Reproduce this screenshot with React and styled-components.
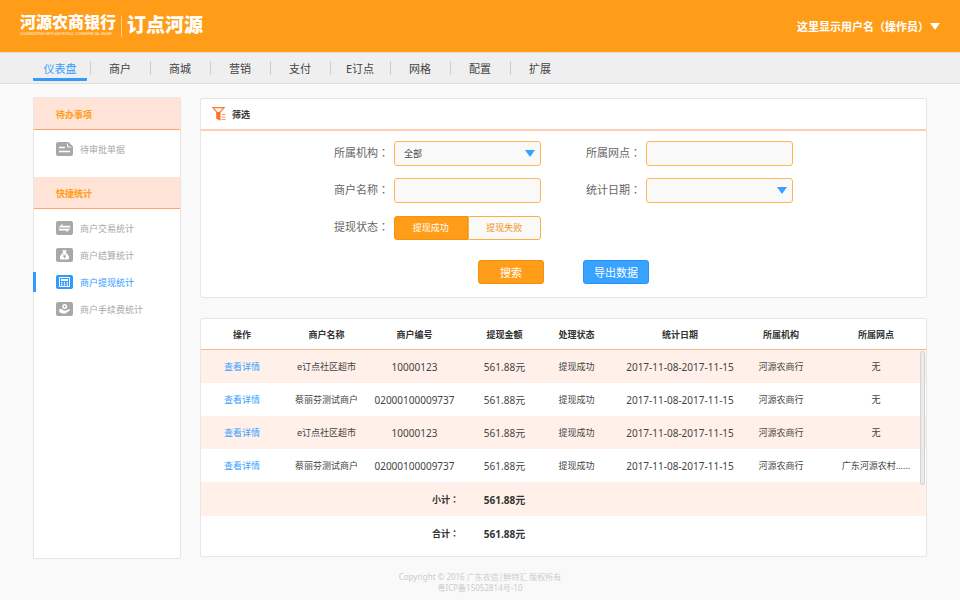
import React, { useState } from "react";
import styled, { createGlobalStyle } from "styled-components";

const GlobalStyle = createGlobalStyle`
  * {
    box-sizing: border-box;
  }
  body {
    margin: 0;
    background: #f9f9f9;
    color: #444;
    font-family: "Noto Sans", "Noto Sans CJK SC", sans-serif;
    font-size: 9px;
  }
  button,
  input,
  select {
    font-family: inherit;
    margin: 0;
  }
  ul {
    list-style: none;
    margin: 0;
    padding: 0;
  }
  a {
    text-decoration: none;
  }
`;

// full-width punctuation sits in the middle of its box
const Punct = styled.span`
  font-family: "Noto Sans CJK TC", sans-serif;
`;

const Header = styled.header`
  display: flex;
  align-items: center;
  justify-content: space-between;
  height: 52px;
  padding: 0 20px;
  background: #ff9d18;
  color: #fff;
`;

const Logo = styled.a`
  display: flex;
  align-items: center;
  gap: 5px;
  color: #fff;
  font-family: "Liberation Sans", "Noto Sans CJK SC", sans-serif;
  font-weight: 900;
`;

const BankName = styled.span`
  display: flex;
  flex-direction: column;
  font-size: 16px;
  line-height: 16px;
`;

const BankNameEn = styled.small`
  font-family: Roboto, sans-serif;
  font-size: 4px;
  line-height: 6px;
  font-weight: 400;
  opacity: 0.8;
`;

const LogoDivider = styled.i`
  width: 1px;
  height: 21px;
  background: #ffd08c;
`;

const ProductName = styled.span`
  font-size: 19px;
  line-height: 20px;
`;

const UserMenu = styled.button`
  display: flex;
  align-items: center;
  gap: 1px;
  padding: 0;
  border: 0;
  background: none;
  color: #fff;
  font-size: 11px;
  font-weight: 700;
`;

const Nav = styled.nav`
  border-top: 1px solid #e3dccf;
  border-bottom: 1px solid #e6dcd8;
  background: #efefef;
`;

const NavList = styled.ul`
  display: flex;
  height: 30px;
  padding-left: 31px;
`;

const NavItem = styled.li`
  display: flex;
  align-items: flex-start;
  width: 60px;

  & + &::before {
    content: "";
    width: 1px;
    height: 14px;
    margin: 8px 0 0 -1px;
    background: #cecece;
  }
`;

const NavLink = styled.a`
  flex: 1;
  height: 28px;
  margin: 0 4px 0 2px;
  border-bottom: 3px solid ${(props) => (props.$active ? "#2f9bff" : "transparent")};
  border-radius: 1px;
  color: ${(props) => (props.$active ? "#2f9bff" : "#444")};
  font-size: 11px;
  line-height: 32px;
  text-align: center;
  white-space: nowrap;
`;

const Main = styled.main`
  display: grid;
  grid-template-columns: 148px minmax(0, 1fr);
  gap: 19px;
  padding: 13px 33px 0;
`;

const Sidebar = styled.aside`
  border: 1px solid #e6e6e6;
  border-radius: 2px;
  background: #fff;
`;

const SideTitle = styled.h2`
  height: 32px;
  margin: 0;
  padding-left: 22px;
  border-bottom: 1px solid #ffa26b;
  background: #ffe3d6;
  color: #ff9d18;
  font-size: 9px;
  line-height: 34px;
`;

const SideList = styled.ul`
  display: flex;
  flex-direction: column;
  gap: 7px;
  padding: 9px 0 18px;
`;

const SideLink = styled.a`
  display: flex;
  align-items: center;
  gap: 7px;
  height: 20px;
  margin-left: -1px;
  padding-left: 20px;
  border-left: 3px solid ${(props) => (props.$active ? "#2f9bff" : "transparent")};
  color: ${(props) => (props.$active ? "#2f9bff" : "#a8a8a8")};
`;

const Content = styled.div`
  display: flex;
  flex-direction: column;
  gap: 20px;
  padding: 1px 0 2px;
`;

const Panel = styled.section`
  position: relative;
  border: 1px solid #e6e6e6;
  border-radius: 2px;
  background: #fff;
`;

const PanelTitle = styled.h2`
  display: flex;
  align-items: center;
  gap: 6px;
  height: 32px;
  margin: 0;
  padding-left: 11px;
  border-bottom: 2px solid #ffcdb3;
  color: #333;
  font-size: 9px;
`;

const FilterForm = styled.form`
  padding: 10px 0 13px;
`;

const Fields = styled.div`
  display: grid;
  grid-template-columns: 207px 207px;
  justify-content: center;
  gap: 12px 45px;
`;

const Field = styled.div`
  display: flex;
  align-items: center;
  height: 25px;
`;

const Label = styled.label`
  width: 60px;
  padding-bottom: 3px;
  color: #666;
  font-size: 11px;
  white-space: nowrap;
`;

const TextInput = styled.input`
  width: 147px;
  height: 25px;
  padding: 0 9px;
  border: 1px solid #ffb653;
  border-radius: 3px;
  background: #f9f9f9;
  color: #444;
  font-size: 9px;
`;

const SelectBox = styled.div`
  position: relative;

  svg {
    position: absolute;
    top: 9px;
    right: 6px;
    pointer-events: none;
  }
`;

const Select = styled(TextInput).attrs({ as: "select" })`
  appearance: none;
`;

const Segmented = styled.div`
  display: flex;
  width: 147px;
  height: 24px;
`;

const Segment = styled.button`
  flex: 1;
  padding: 0;
  border: 1px solid ${(props) => (props.$on ? "#f9920b" : "#ffae44")};
  border-radius: ${(props) => (props.$first ? "3px 0 0 3px" : "0 3px 3px 0")};
  background: ${(props) => (props.$on ? "#ff9d18" : "#f9f9f9")};
  color: ${(props) => (props.$on ? "#fff" : "#f0931a")};
  font-size: 9px;
`;

const Actions = styled.div`
  display: flex;
  justify-content: center;
  gap: 39px;
  margin-top: 20px;
`;

const Button = styled.button`
  width: 66px;
  height: 24px;
  padding: 0;
  border: 1px solid ${(props) => (props.$blue ? "#2b93f2" : "#f0900f")};
  border-radius: 3px;
  background: ${(props) => (props.$blue ? "#37a2ff" : "#ff9d18")};
  color: #fff;
  font-size: 11px;
`;

const TablePanel = styled(Panel)`
  padding-bottom: 6px;
`;

const Table = styled.table`
  width: 100%;
  border-spacing: 0;
  table-layout: fixed;

  th,
  td {
    height: 33px;
    padding: 0;
    text-align: center;
    white-space: nowrap;
  }
  th {
    color: #333;
  }
  thead th {
    height: 31px;
    border-bottom: 1px solid #ffb58c;
  }
  tbody tr:nth-child(odd) {
    background: #fff0e9;
  }
`;

const Cell = styled.td`
  font-size: ${(props) => (props.$num ? "10px" : "9px")};
`;

const LastCell = styled.td`
  && {
    padding-left: 21px;
  }
`;

const TotalRow = styled.tr`
  && > * {
    height: 34px;
  }
  && th {
    text-align: right;
  }
`;

const TotalCell = styled(Cell)`
  color: #333;
  font-weight: 700;
`;

const RowLink = styled.a`
  color: #37a2ff;
`;

const ScrollThumb = styled.div`
  position: absolute;
  top: 32px;
  right: 1px;
  width: 5px;
  height: 134px;
  border: 1px solid #d2d2d2;
  border-radius: 3px;
  background: #ebebeb;
`;

const Footer = styled.footer`
  padding: 12px 0 6px;
  color: #ccc;
  font-size: 8px;
  line-height: 11px;
  text-align: center;

  p {
    margin: 0;
  }
`;

const Triangle = ({ color }) => (
  <svg width="10" height="7" viewBox="0 0 10 7" aria-hidden="true">
    <path d="M0 0h10L5 7z" fill={color} />
  </svg>
);

const FilterIcon = () => (
  <svg width="14" height="14" viewBox="0 0 14 14" aria-hidden="true">
    <path d="M.9.7h11.200L8 5.500H5z" fill="#fff3ec" stroke="#ff7d3c" strokeWidth="1.200" />
    <path d="M4.200 5.200h4.300v8.600L4.200 11.500z" fill="#ff6f2c" />
    <path d="M9.500 7.500h4M9.500 10h4M9.500 12.500h4" stroke="#ff9a66" />
  </svg>
);

const glyphs = {
  transfer: (
    <path d="M2.500 6.400L6.500 2.800v1.900h7.700v1.700zM14.500 7.700l-4 3.600V9.400H2.800V7.700z" fill="#fff" />
  ),
  bag: (
    <>
      <path
        d="M6.300 2.300h4.400l-.9 2.200c2 1.500 3.300 3.500 3.300 5.200 0 1.400-.8 1.900-2 1.900H5.900c-1.200 0-2-.5-2-1.900 0-1.700 1.300-3.700 3.300-5.200z"
        fill="#fff"
      />
      <path d="M7.200 6.300l1.300 1.400 1.300-1.400M7 8.300h3M8.500 7.800v2.500" fill="none" stroke="currentColor" />
    </>
  ),
  calc: (
    <>
      <path d="M3.500 2.500h10v9h-10z" fill="none" stroke="#fff" />
      <path d="M5 4h7v2H5z" fill="#fff" />
      <path d="M5.700 7v3.500M8.500 7v3.500M11.300 7v3.500" stroke="#fff" strokeWidth="1.300" strokeDasharray="1.500 .5" />
    </>
  ),
  hand: (
    <>
      <circle cx="8.700" cy="4.500" r="1.800" fill="none" stroke="#fff" strokeWidth="1.400" />
      <path
        d="M3.300 7.300c1.700-.5 2.800 0 3.800 1l2.600.4 3.500-1.700.8 1.200-4.200 3.100c-1.800.8-4 0-6.500-1.300z"
        fill="#fff"
      />
    </>
  ),
};

const SideIcon = ({ name }) => {
  if (name === "doc") {
    return (
      <svg width="17" height="14" viewBox="0 0 17 14" aria-hidden="true">
        <path
          d="M2 0h10.500L17 4.500V12a2 2 0 0 1-2 2H2a2 2 0 0 1-2-2V2a2 2 0 0 1 2-2z"
          fill="currentColor"
        />
        <path d="M3 5.500h6M3 9.500h11" stroke="#fff" strokeWidth="1.400" />
        <path d="M11.500 1.500V5H15" fill="none" stroke="#fff" />
      </svg>
    );
  }
  return (
    <svg width="17" height="14" viewBox="0 0 17 14" aria-hidden="true">
      <rect width="17" height="14" rx="2" fill="currentColor" />
      {glyphs[name]}
    </svg>
  );
};

const navItems = ["仪表盘", "商户", "商城", "营销", "支付", "E订点", "网格", "配置", "扩展"];

const sideGroups = [
  { title: "待办事项", items: [{ icon: "doc", text: "待审批单据" }] },
  {
    title: "快捷统计",
    items: [
      { icon: "transfer", text: "商户交易统计" },
      { icon: "bag", text: "商户结算统计" },
      { icon: "calc", text: "商户提现统计", active: true },
      { icon: "hand", text: "商户手续费统计" },
    ],
  },
];

const columns = [82, 87, 89, 91, 53, 154, 48, 121];
const heads = ["操作", "商户名称", "商户编号", "提现金额", "处理状态", "统计日期", "所属机构"];

const shopA = { name: "e订点社区超市", no: "10000123" };
const shopB = { name: "蔡丽芬测试商户", no: "02000100009737" };
const rows = [
  { ...shopA, branch: "无" },
  { ...shopB, branch: "无" },
  { ...shopA, branch: "无" },
  { ...shopB, branch: "广东河源农村......" },
];

const App = () => {
  const [status, setStatus] = useState("提现成功");

  return (
    <>
      <GlobalStyle />
      <Header>
        <Logo href="#">
          <BankName>
            河源农商银行
            <BankNameEn>GUANGDONG HEYUAN RURAL COMMERCIAL BANK</BankNameEn>
          </BankName>
          <LogoDivider />
          <ProductName>订点河源</ProductName>
        </Logo>
        <UserMenu type="button">
          <span>
            这里显示用户名<Punct>（</Punct>操作员<Punct>）</Punct>
          </span>
          <Triangle color="#fff" />
        </UserMenu>
      </Header>

      <Nav>
        <NavList>
          {navItems.map((item, index) => (
            <NavItem key={item}>
              <NavLink href="#" $active={index === 0}>
                {item}
              </NavLink>
            </NavItem>
          ))}
        </NavList>
      </Nav>

      <Main>
        <Sidebar>
          {sideGroups.map((group) => (
            <React.Fragment key={group.title}>
              <SideTitle>{group.title}</SideTitle>
              <SideList>
                {group.items.map((item) => (
                  <li key={item.text}>
                    <SideLink href="#" $active={item.active}>
                      <SideIcon name={item.icon} />
                      {item.text}
                    </SideLink>
                  </li>
                ))}
              </SideList>
            </React.Fragment>
          ))}
        </Sidebar>

        <Content>
          <Panel>
            <PanelTitle>
              <FilterIcon />
              筛选
            </PanelTitle>
            <FilterForm onSubmit={(e) => e.preventDefault()}>
              <Fields>
                <Field>
                  <Label htmlFor="org">
                    所属机构<Punct>：</Punct>
                  </Label>
                  <SelectBox>
                    <Select id="org">
                      <option>全部</option>
                    </Select>
                    <Triangle color="#37a2ff" />
                  </SelectBox>
                </Field>
                <Field>
                  <Label htmlFor="branch">
                    所属网点<Punct>：</Punct>
                  </Label>
                  <TextInput id="branch" type="text" />
                </Field>
                <Field>
                  <Label htmlFor="merchant">
                    商户名称<Punct>：</Punct>
                  </Label>
                  <TextInput id="merchant" type="text" />
                </Field>
                <Field>
                  <Label htmlFor="date">
                    统计日期<Punct>：</Punct>
                  </Label>
                  <SelectBox>
                    <Select id="date">
                      <option></option>
                    </Select>
                    <Triangle color="#37a2ff" />
                  </SelectBox>
                </Field>
                <Field>
                  <Label as="span" id="status">
                    提现状态<Punct>：</Punct>
                  </Label>
                  <Segmented role="group" aria-labelledby="status">
                    {["提现成功", "提现失败"].map((item, index) => (
                      <Segment
                        key={item}
                        type="button"
                        $first={index === 0}
                        $on={status === item}
                        aria-pressed={status === item}
                        onClick={() => setStatus(item)}
                      >
                        {item}
                      </Segment>
                    ))}
                  </Segmented>
                </Field>
              </Fields>
              <Actions>
                <Button type="submit">搜索</Button>
                <Button type="button" $blue>
                  导出数据
                </Button>
              </Actions>
            </FilterForm>
          </Panel>

          <TablePanel>
            <Table>
              <colgroup>
                {columns.map((width, index) => (
                  <col key={index} width={width} />
                ))}
              </colgroup>
              <thead>
                <tr>
                  {heads.map((head) => (
                    <th key={head} scope="col">
                      {head}
                    </th>
                  ))}
                  <LastCell as="th" scope="col">
                    所属网点
                  </LastCell>
                </tr>
              </thead>
              <tbody>
                {rows.map((row, index) => (
                  <tr key={index}>
                    <Cell>
                      <RowLink href="#">查看详情</RowLink>
                    </Cell>
                    <Cell>{row.name}</Cell>
                    <Cell $num>{row.no}</Cell>
                    <Cell $num>561.88元</Cell>
                    <Cell>提现成功</Cell>
                    <Cell $num>2017-11-08-2017-11-15</Cell>
                    <Cell>河源农商行</Cell>
                    <LastCell>{row.branch}</LastCell>
                  </tr>
                ))}
                {["小计", "合计"].map((name) => (
                  <TotalRow key={name}>
                    <th scope="row" colSpan={3}>
                      {name}
                      <Punct>：</Punct>
                    </th>
                    <TotalCell $num>561.88元</TotalCell>
                    <td colSpan={4}></td>
                  </TotalRow>
                ))}
              </tbody>
            </Table>
            <ScrollThumb />
          </TablePanel>
        </Content>
      </Main>

      <Footer>
        <p>Copyright © 2016 广东农信|鲜特汇 版权所有</p>
        <p>粤ICP备15052814号-10</p>
      </Footer>
    </>
  );
};

export default App;
